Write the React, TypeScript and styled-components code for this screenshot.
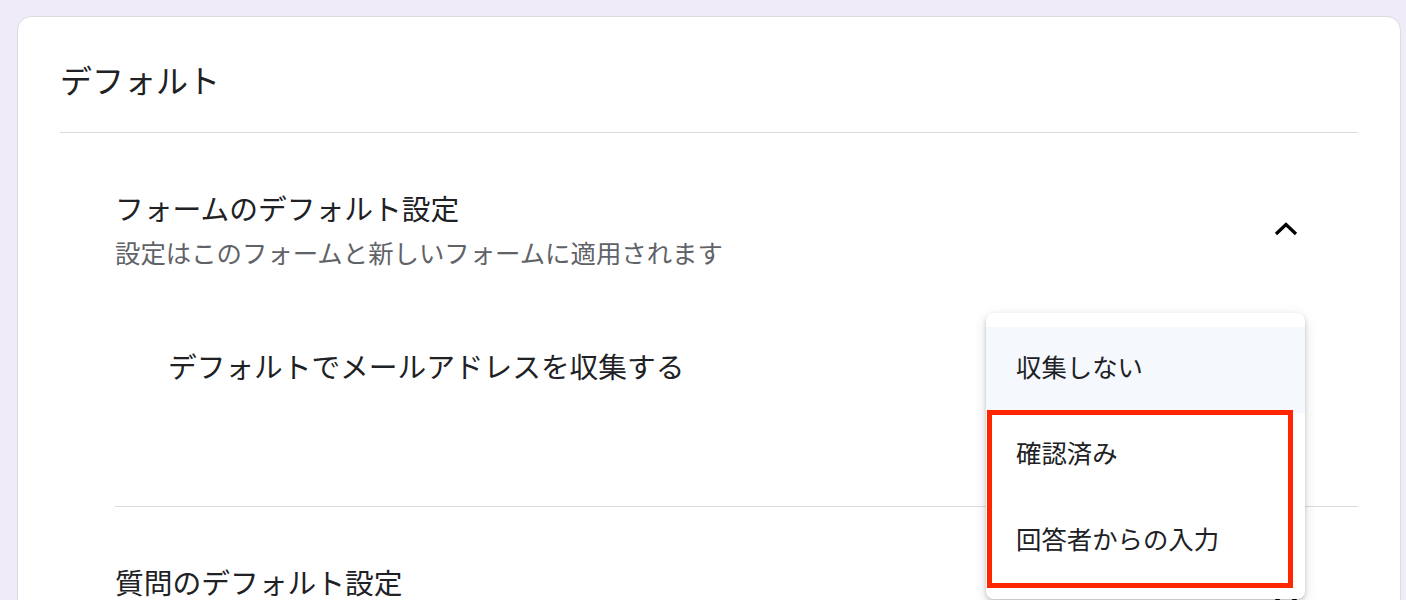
import React from "react";
import styled, { createGlobalStyle } from "styled-components";

const Global = createGlobalStyle`
  html, body { margin: 0; padding: 0; }
  body {
    background: #efebf8;
    font-family: "Noto Sans CJK JP", "Noto Sans", sans-serif;
    color: #202124;
  }
`;

const Page = styled.div`
  padding: 16px 5px 0 17px;
  height: 600px;
  box-sizing: border-box;
  overflow: hidden;
`;

const Card = styled.div`
  background: #fff;
  border: 1px solid #dadce0;
  border-radius: 14px;
  padding: 38px 42px 0 42px;
  min-height: 700px;
`;

const Title = styled.h1`
  margin: 0 0 29px 0;
  font-size: 32px;
  line-height: 48px;
  font-weight: 400;
  color: #202124;
`;

const Divider = styled.hr<{ $indent?: number }>`
  border: none;
  border-top: 1px solid #dadce0;
  margin: 0 0 0 ${(p) => p.$indent ?? 0}px;
`;

const Section = styled.section`
  margin-left: 55px;
`;

const Header = styled.div`
  display: flex;
  align-items: center;
  justify-content: space-between;
  padding: 55px 48px 0 0;
`;

const HeaderText = styled.div`
  display: flex;
  flex-direction: column;
  gap: 6px;
`;

const Heading = styled.div`
  font-size: 28.75px;
  line-height: 40px;
  color: #202124;
`;

const Sub = styled.div`
  font-size: 25.4px;
  line-height: 36px;
  color: #5f6368;
`;

const ChevronButton = styled.div`
  width: 48px;
  height: 48px;
  display: flex;
  align-items: center;
  justify-content: center;
`;

const Row = styled.div`
  display: flex;
  justify-content: space-between;
  align-items: flex-start;
  padding: 76px 0 120px 53px;
`;

const RowLabel = styled.div`
  font-size: 28.7px;
  line-height: 40px;
  color: #202124;
`;

const SelectWrap = styled.div`
  position: relative;
  width: 319px;
  height: 40px;
  margin-right: 53px;
`;

const Menu = styled.div`
  position: absolute;
  top: -33px;
  left: 0;
  width: 319px;
  padding: 14px 0;
  background: #fff;
  border-radius: 8px;
  box-shadow: 0 2px 4px rgba(0, 0, 0, 0.18), 0 4px 14px rgba(0, 0, 0, 0.12);
  z-index: 10;
`;

const Item = styled.div<{ $selected?: boolean }>`
  height: 86px;
  box-sizing: border-box;
  display: flex;
  align-items: center;
  padding: 0 0 8px 30px;
  font-size: 25.4px;
  color: #202124;
  background: ${(p) => (p.$selected ? "#f5f8fd" : "#fff")};
`;

const Highlight = styled.div`
  position: absolute;
  left: 1px;
  top: 97px;
  width: 306px;
  height: 178px;
  box-sizing: border-box;
  border: 5px solid #ff2600;
  pointer-events: none;
`;

const Chevron = ({ up }: { up: boolean }) => (
  <svg width="24" height="14" viewBox="0 0 24 14">
    <path
      d={up ? "M2 12 L12 2.5 L22 12" : "M2 2 L12 11.5 L22 2"}
      fill="none"
      stroke="#000"
      strokeWidth="3.2"
    />
  </svg>
);

export default function App() {
  return (
    <>
      <Global />
      <Page>
        <Card>
          <Title>デフォルト</Title>
          <Divider />
          <Section>
            <Header>
              <HeaderText>
                <Heading>フォームのデフォルト設定</Heading>
                <Sub>設定はこのフォームと新しいフォームに適用されます</Sub>
              </HeaderText>
              <ChevronButton>
                <Chevron up />
              </ChevronButton>
            </Header>
            <Row>
              <RowLabel>デフォルトでメールアドレスを収集する</RowLabel>
              <SelectWrap>
                <Menu>
                  <Item $selected>収集しない</Item>
                  <Item>確認済み</Item>
                  <Item>回答者からの入力</Item>
                  <Highlight />
                </Menu>
              </SelectWrap>
            </Row>
            <Divider />
            <Header>
              <HeaderText>
                <Heading>質問のデフォルト設定</Heading>
                <Sub>設定はこのフォームと新しいフォームに適用されます</Sub>
              </HeaderText>
              <ChevronButton>
                <Chevron up={false} />
              </ChevronButton>
            </Header>
          </Section>
        </Card>
      </Page>
    </>
  );
}
